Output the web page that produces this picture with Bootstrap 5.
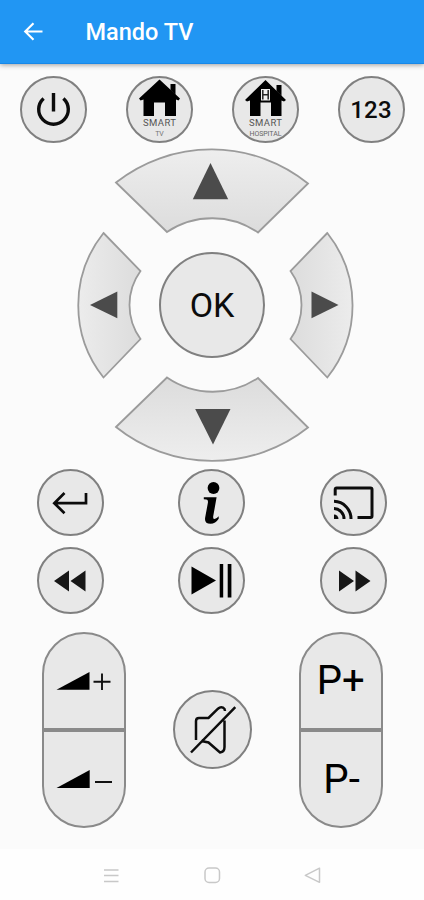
<!DOCTYPE html>
<html lang="es">
<head>
<meta charset="utf-8">
<meta name="viewport" content="width=device-width, initial-scale=1">
<title>Mando TV</title>
<link href="https://cdn.jsdelivr.net/npm/bootstrap@5.3.0/dist/css/bootstrap.min.css" rel="stylesheet">
<style>
body{font-family:Roboto,"Liberation Sans",sans-serif;background:#fbfbfb;color:#0c0c0c}
svg{display:block;overflow:visible}
.screen{height:900px;width:424px}
.app-bar{height:64px;background:#2196f3;border-bottom:1px solid #1788e8;box-shadow:0 1px 5px rgba(0,0,0,.38);padding:0 0 0 21px}
.app-title{font-size:23.5px;font-weight:500;margin-left:40.5px;line-height:1;padding-top:2px}
.key{width:67px;height:67px;background:#e8e8e8;border:2px solid #808080;border-radius:50%;padding:0;color:#0c0c0c;flex:none}
.key svg{width:67px;height:67px;margin:-2px}
.key-ok{width:106px;height:106px;font-size:34px;line-height:1;margin-right:7px}
.key-num{font-size:24px;font-weight:500;letter-spacing:.2px;line-height:1}
.key-mute{width:79px;height:79px}
.key-mute svg{width:79px;height:79px}
.top-keys{padding-top:12px}
.dpad{height:315px;margin:5px 0 5.5px}
.dpad button,.rocker button{background:none;border:0;padding:0;display:block}
.dpad-mid{width:277px;height:148px;margin-left:7px}
.sector{fill:url(#shadeV);stroke:#9b9b9b;stroke-width:1.8;stroke-linejoin:miter}
.sector-l{fill:url(#shadeL)}
.sector-r{fill:url(#shadeR)}
.sector-d{fill:url(#shadeD)}
.arrow{fill:#4b4b4b}
.media-keys{row-gap:11.5px}
.lower{padding:17.5px 41px 0 42px}
.rocker{width:84px;height:196px;background:#e8e8e8;border:2px solid #8a8a8a;border-radius:42px;overflow:hidden}
.rocker button{height:94px;width:80px}
.rocker button+button{border-top:4px solid #8a8a8a;height:98px}
.rocker svg{width:80px;height:94px}
.sys-bar{height:51px;background:#fefefe}
</style>
<script src="https://cdn.jsdelivr.net/npm/bootstrap@5.3.0/dist/js/bootstrap.bundle.min.js"></script>
</head>
<body>
<div class="screen d-flex flex-column overflow-hidden">
<header class="app-bar d-flex align-items-center text-white flex-shrink-0">
<svg width="24" height="24" viewBox="0 0 24 24" fill="none" stroke="#fff" stroke-width="2.1"><path d="M21.5 11.500H4M12.5 3.2 4.2 11.500l8.3 8.3"/></svg>
<h1 class="app-title mb-0">Mando TV</h1>
</header>
<main class="flex-grow-1">
<div class="row g-0 top-keys">
<div class="col-3 d-flex justify-content-center"><button class="key" aria-label="Power"><svg viewBox="0 0 67 67" fill="none" stroke="#0c0c0c" stroke-width="3.4"><path d="M33.5 17v18.5M23.6 22.4a14.8 14.8 0 1 0 19.8 0"/></svg></button></div>
<div class="col-3 d-flex justify-content-center"><button class="key"><svg viewBox="0 0 67 67"><path d="M33.5 3.5 54 22.5l-1.5 2-2.500-1V40H39V26.500H28V40H17.500V23.500L14.500 24.500 13 22.500Z"/><path d="M44.500 8h5v11l-5-5z"/><text x="33.500" y="49.700" font-size="9.500" text-anchor="middle" textLength="33" fill="#555">SMART</text><text x="33.500" y="59.500" font-size="7" text-anchor="middle" textLength="8.500" fill="#777">TV</text></svg></button></div>
<div class="col-3 d-flex justify-content-center"><button class="key"><svg viewBox="0 0 67 67"><path d="M33.500 4 54 24l-2 1.500-2.500-1V40H39V26.500H28.500V40H18V24.500L15 25.500 13 24Z"/><path d="M44.500 9h5v11l-5-5z"/><path fill="#eee" d="M29 13h9v11.500h-9z"/><path d="M30.800 14v9.500M36.200 14v9.500M30.300 18.700h6.400" stroke="#222" stroke-width="1.500"/><text x="33.500" y="49.700" font-size="9.500" text-anchor="middle" textLength="33" fill="#555">SMART</text><text x="33.500" y="59.700" font-size="7" text-anchor="middle" textLength="32" fill="#666">HOSPITAL</text></svg></button></div>
<div class="col-3 d-flex justify-content-center"><button class="key key-num">123</button></div>
</div>

<div class="dpad d-flex flex-column align-items-center">
<button aria-label="Arriba"><svg width="194" height="83" viewBox="115 148 194 83">
<defs>
<linearGradient id="shadeV" x1="0" y1="0" x2="0" y2="1"><stop offset="0" stop-color="#eee"/><stop offset="1" stop-color="#dcdcdc"/></linearGradient>
<linearGradient id="shadeD" x1="0" y1="0" x2="0" y2="1"><stop offset="0" stop-color="#dcdcdc"/><stop offset="1" stop-color="#eee"/></linearGradient>
<linearGradient id="shadeL"><stop offset="0" stop-color="#ececec"/><stop offset="1" stop-color="#dcdcdc"/></linearGradient>
<linearGradient id="shadeR"><stop offset="0" stop-color="#dcdcdc"/><stop offset="1" stop-color="#ececec"/></linearGradient>
</defs>
<path class="sector" d="M116 182.500A154 154 0 0 1 308 183.500L258 232.500A81 81 0 0 0 167 232Z"/><path class="arrow" d="M210.500 163 228.200 199.300H192.800Z"/></svg></button>
<div class="dpad-mid d-flex justify-content-between align-items-center">
<button aria-label="Izquierda"><svg width="65" height="148" viewBox="77 231 65 148"><path class="sector sector-l" d="M103.500 233 140.500 271A58 58 0 0 0 140.500 339L103.500 377.500A116 116 0 0 1 103.500 233Z"/><path class="arrow" d="M90 305 117.300 291.500V318.200Z"/></svg></button>
<span class="key key-ok d-flex align-items-center justify-content-center" role="button">OK</span>
<button aria-label="Derecha"><svg width="65" height="148" viewBox="289 231 65 148"><path class="sector sector-r" d="M327.300 233 290.500 271A58 58 0 0 1 290.500 339L327.300 377.500A116 116 0 0 0 327.300 233Z"/><path class="arrow" d="M338.500 305 311.500 291.500V318.200Z"/></svg></button>
</div>
<button aria-label="Abajo"><svg width="194" height="84" viewBox="115 379 194 84"><path class="sector sector-d" d="M116 427 167 377.500A81 81 0 0 0 258 378L308 427.500A154 154 0 0 1 116 427Z"/><path class="arrow" d="M195.200 409H230.500L213 444.500Z"/></svg></button>
</div>

<div class="row gx-0 media-keys">
<div class="col-4 d-flex justify-content-center"><button class="key" aria-label="Volver"><svg viewBox="0 0 67 67" fill="none" stroke="#0c0c0c" stroke-width="2.700"><path d="M49 24v10.200H17.500M27.500 24 17.300 34.200 27.500 44.200"/></svg></button></div>
<div class="col-4 d-flex justify-content-center"><button class="key" aria-label="Información"><svg viewBox="0 0 67 67"><circle cx="35.500" cy="19" r="5.900"/><path d="M25.800 28.300h12.800l-3.300 18.500q-.6 3.300 1.200 3.300 1.800 0 4.200-2.800v2.500q-3.200 5-8.200 5-6.500 0-5.300-6.500l2.700-14.500q.5-3-1.600-3.200l-2.500-.3z"/></svg></button></div>
<div class="col-4 d-flex justify-content-center"><button class="key" aria-label="Transmitir"><svg viewBox="0 0 67 67" fill="none" stroke="#0c0c0c" stroke-width="3"><path d="M15.200 26.500V20.500Q15.200 19 16.700 19H50.500Q52 19 52 20.500V47Q52 48.500 50.500 48.500H37.500M14 32.300A17.500 17.500 0 0 1 31 50M14 39.500A10.300 10.300 0 0 1 24 50"/><path d="M14 45.500A4.500 4.500 0 0 1 18.500 50H14Z" fill="#0c0c0c" stroke="none"/></svg></button></div>
<div class="col-4 d-flex justify-content-center"><button class="key" aria-label="Retroceder"><svg viewBox="0 0 67 67" fill="#171717"><path d="M17 34 32 23.500V44.500ZM33.500 34 48.500 23.500V44.500Z"/></svg></button></div>
<div class="col-4 d-flex justify-content-center"><button class="key" aria-label="Reproducir o pausar"><svg viewBox="0 0 67 67"><path d="M13.500 19.500 38 33.500 13.500 47.500ZM41.700 17h3.500v33.500h-3.500zM49.700 17h3.700v33.500h-3.700z"/></svg></button></div>
<div class="col-4 d-flex justify-content-center"><button class="key" aria-label="Avanzar"><svg viewBox="0 0 67 67" fill="#171717"><path d="M19 23.500 34 34 19 44.500ZM35.500 23.500 50.500 34 35.500 44.500Z"/></svg></button></div>
</div>

<div class="lower d-flex justify-content-between align-items-center">
<div class="rocker">
<button aria-label="Subir volumen"><svg viewBox="44 634 80 94"><path d="M56.500 689.700 89.500 672V689.700Z"/><path d="M93.500 681.700h17M102 673.500v16.500" stroke="#111" stroke-width="1.900"/></svg></button>
<button aria-label="Bajar volumen"><svg viewBox="44 732 80 94"><path d="M56.500 788 89.700 770V788Z"/><path d="M95 782h17" stroke="#111" stroke-width="1.900"/></svg></button>
</div>
<button class="key key-mute" aria-label="Silenciar"><svg viewBox="172.500 690 79 79" fill="none" stroke="#0c0c0c" stroke-width="2.500"><path d="M195.500 740V721Q195.500 718 198.500 718H208L217.500 708.700Q220 706.500 222.500 707.700 224.500 708.700 224.500 711M224 720.500V747Q224 752 219.500 752.500L208 742.500 201 741M190.500 752.500 234.800 707.200"/></svg></button>
<div class="rocker">
<button><svg viewBox="301 634 80 94"><text x="316.800" y="694" font-size="40" textLength="48" lengthAdjust="spacingAndGlyphs">P+</text></svg></button>
<button><svg viewBox="301 732 80 94"><text x="323.300" y="792.500" font-size="40" textLength="36.500" lengthAdjust="spacingAndGlyphs">P-</text></svg></button>
</div>
</div>
</main>
<footer class="sys-bar flex-shrink-0">
<svg width="424" height="51" viewBox="0 849 424 51" fill="none" stroke="#c8c8c8" stroke-width="1.500"><path d="M104 870h14.500M104 875.500h14.500M104 881.500h14.500"/><rect x="205" y="868" width="14.500" height="14.500" rx="4"/><path d="M319.500 868.200V882.300L305.300 875.300Z" stroke-linejoin="round"/></svg>
</footer>
</div>
</body>
</html>
